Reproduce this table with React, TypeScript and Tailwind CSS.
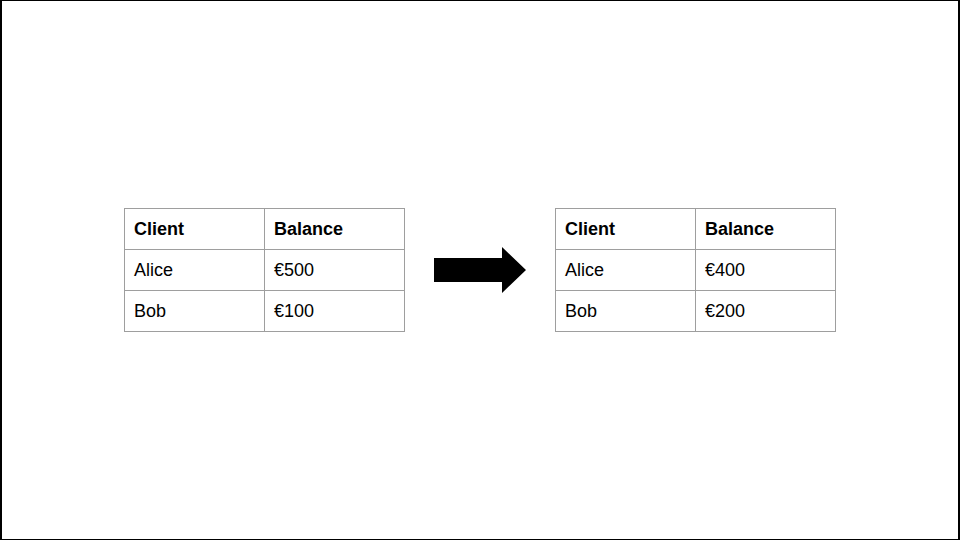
const rowsBefore = [
  ["Alice", "€500"],
  ["Bob", "€100"],
];

const rowsAfter = [
  ["Alice", "€400"],
  ["Bob", "€200"],
];

function BalanceTable({ rows }: { rows: string[][] }) {
  return (
    <table className="border-collapse text-[18px] text-black">
      <thead>
        <tr className="h-[41px]">
          <th className="w-[140px] border border-[#9e9e9e] px-[9px] text-left font-bold">Client</th>
          <th className="w-[140px] border border-[#9e9e9e] px-[9px] text-left font-bold">Balance</th>
        </tr>
      </thead>
      <tbody>
        {rows.map(([name, balance]) => (
          <tr key={name} className="h-[41px]">
            <td className="border border-[#9e9e9e] px-[9px]">{name}</td>
            <td className="border border-[#9e9e9e] px-[9px]">{balance}</td>
          </tr>
        ))}
      </tbody>
    </table>
  );
}

function Arrow() {
  return (
    <svg width="92" height="46" viewBox="0 0 92 46" className="block">
      <polygon points="0,11 68,11 68,0 92,23 68,46 68,35 0,35" fill="#000" />
    </svg>
  );
}

export default function App() {
  return (
    <div
      className="w-[960px] h-[540px] bg-white border-t border-b border-l-2 border-r-2 border-black flex items-center justify-center gap-[29px]"
      style={{ fontFamily: '"Liberation Sans", Arial, sans-serif' }}
    >
      <BalanceTable rows={rowsBefore} />
      <Arrow />
      <BalanceTable rows={rowsAfter} />
    </div>
  );
}
